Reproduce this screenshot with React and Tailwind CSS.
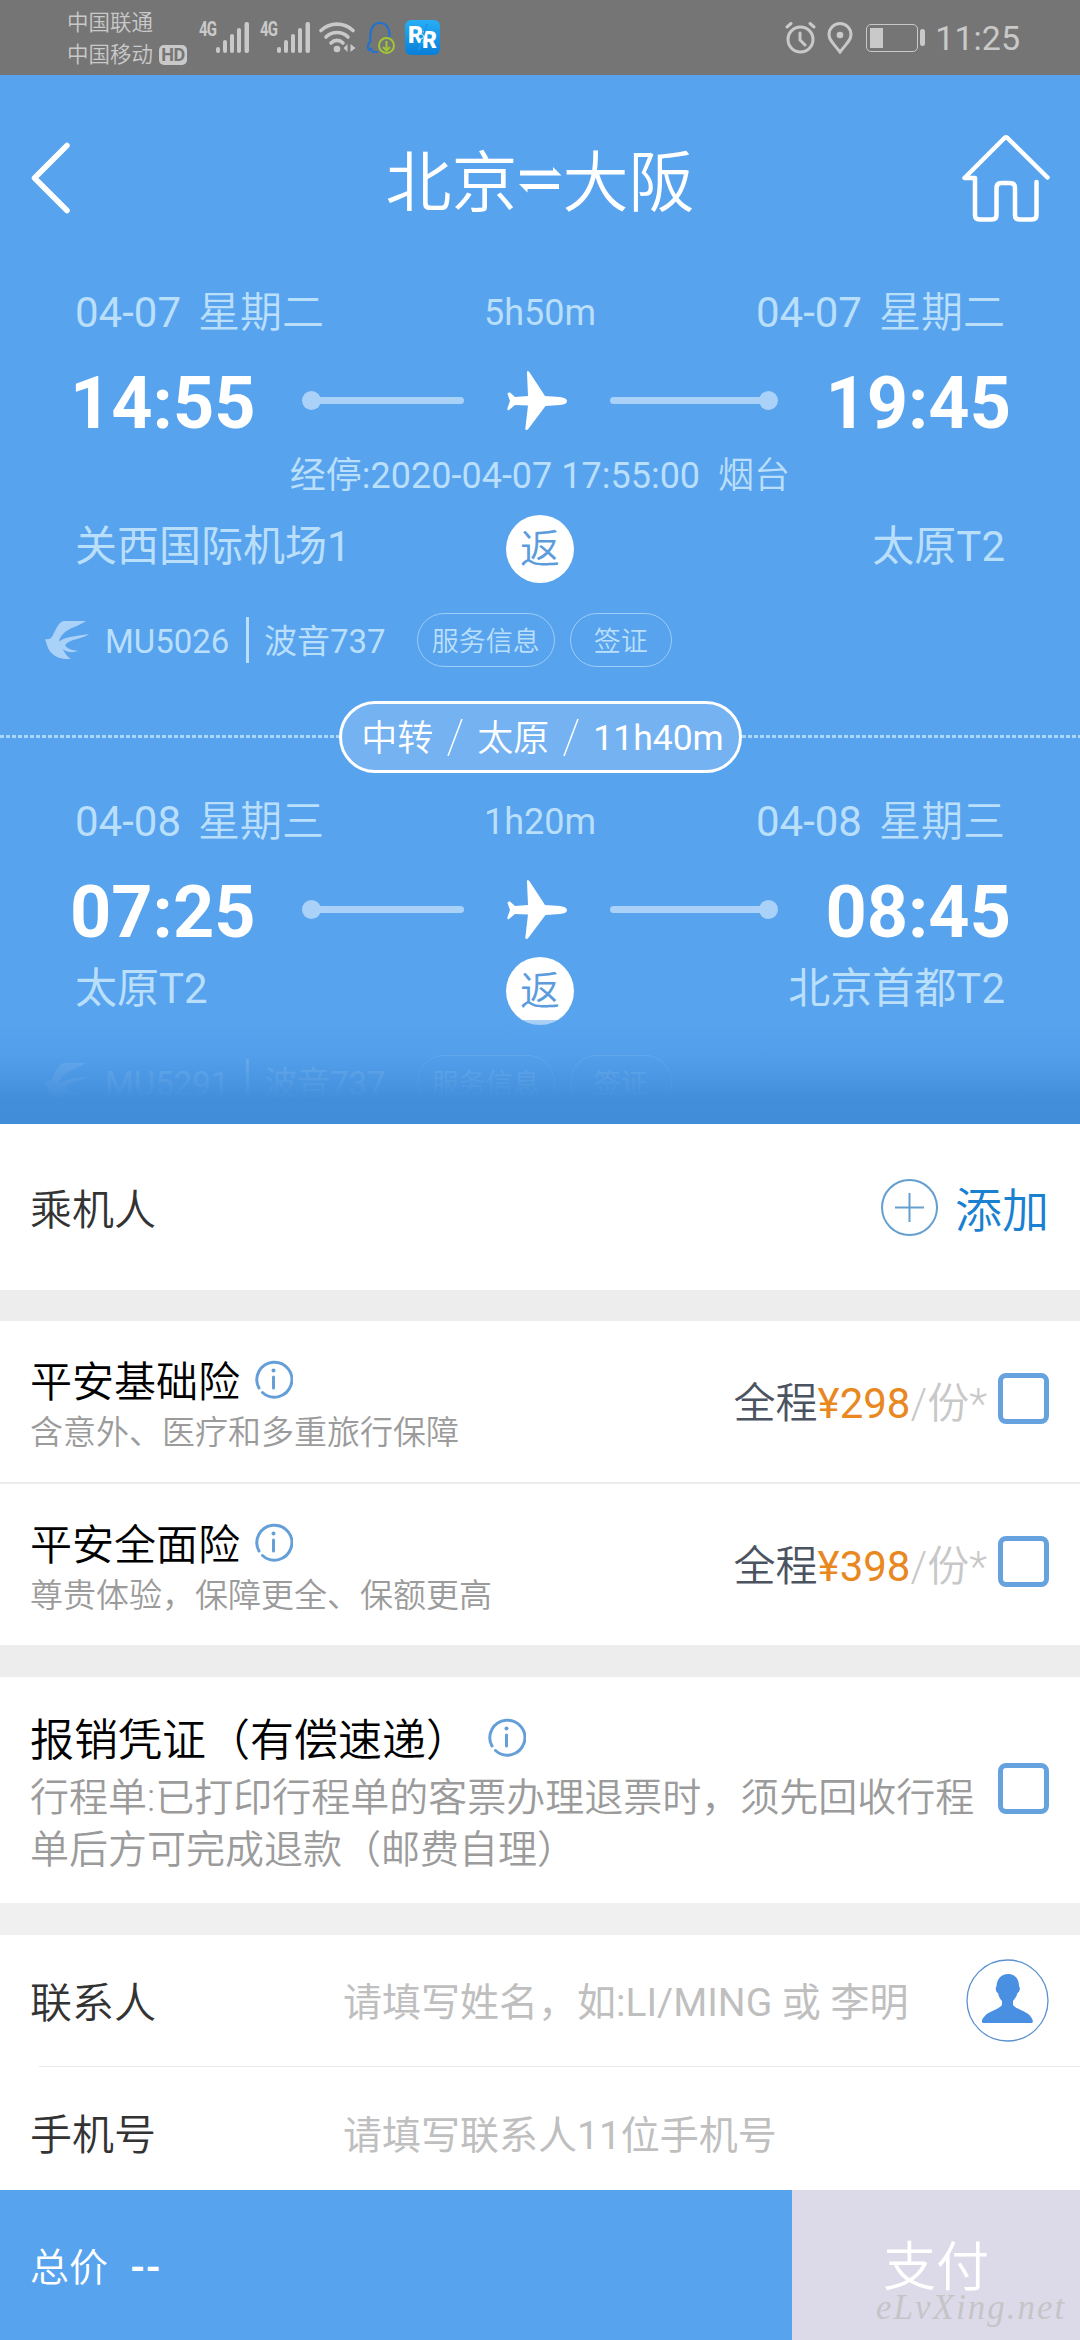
const segments = [
  {
    from: { date: '04-07', day: '星期二', time: '14:55', airport: '关西国际机场1' },
    to: { date: '04-07', day: '星期二', time: '19:45', airport: '太原T2' },
    duration: '5h50m',
    stop: { at: '经停:2020-04-07 17:55:00', city: '烟台' },
    flight: 'MU5026',
    plane: '波音737',
  },
  {
    from: { date: '04-08', day: '星期三', time: '07:25', airport: '太原T2' },
    to: { date: '04-08', day: '星期三', time: '08:45', airport: '北京首都T2' },
    duration: '1h20m',
    flight: 'MU5291',
    plane: '波音737',
  },
];

const insurances = [
  { name: '平安基础险', desc: '含意外、医疗和多重旅行保障', price: '¥298' },
  { name: '平安全面险', desc: '尊贵体验，保障更全、保额更高', price: '¥398' },
];

function Signal() {
  return (
    <div className="flex items-start">
      <span className="w-[17px] text-[20px] leading-[15px] font-bold tracking-[-1px] origin-left scale-x-[0.75] whitespace-nowrap">4G</span>
      <svg width="33" height="31" viewBox="0 0 33 31" fill="currentColor">
        <rect x="0" y="25" width="4" height="6" rx="2" />
        <rect x="7" y="18" width="4" height="13" rx="2" />
        <rect x="14" y="12" width="4" height="19" rx="2" />
        <rect x="21" y="6" width="4" height="25" rx="2" />
        <rect x="28.5" y="0" width="4.5" height="31" rx="2" />
      </svg>
    </div>
  );
}

function StatusBar() {
  return (
    <div className="h-[75px] bg-[#757575] text-[#c9c9c9] flex items-center justify-between pl-[67px] pr-[60px]">
      <div className="flex items-center">
        <div className="w-[132px] pt-[2px] text-[21.5px] leading-[32px] font-[350]">
          <div>中国联通</div>
          <div className="flex items-center gap-[6px]">
            中国移动
            <span className="w-7 h-5 rounded-[5px] bg-[#c9c9c9] text-[#757575] text-[18px] leading-5 font-bold text-center tracking-tight">HD</span>
          </div>
        </div>
        <Signal />
        <div className="w-[11px]" />
        <Signal />
        <svg className="ml-[9px]" width="37" height="31" viewBox="0 0 37 31" fill="none" stroke="currentColor" strokeWidth="3.6" strokeLinecap="round">
          <path d="M2 8.5C11 0 25 0 34 8.5" />
          <path d="M7 15c6-6 16-6 22 0" />
          <path d="M12 21c3.5-3.5 8.500-3.500 12 0" />
          <circle cx="18" cy="27" r="3.300" fill="currentColor" stroke="none" />
          <path d="M28.500 22v8l-4-4zM31.500 22v8l5-4z" fill="currentColor" stroke="none" />
        </svg>
        <svg className="ml-[10px]" width="30" height="34" viewBox="0 0 30 34" fill="none">
          <path d="M12 31H7l-2-3-2 1c-2-3-1-6 1.500-9C3 9 7 2 14 2s10 6 9.500 14" stroke="#2173cf" strokeWidth="2.200" />
          <circle cx="20.500" cy="24.500" r="7.500" fill="#757575" stroke="#a0c537" strokeWidth="2" />
          <path d="M20.500 20v9M17 26l3.500 3.500L24 26" stroke="#a0c537" strokeWidth="2" />
        </svg>
        <div className="ml-[9px] w-[35px] h-[35px] rounded-[6px] bg-gradient-to-b from-[#27aef5] to-[#087ed8] text-white text-[23px] font-black flex items-center justify-center leading-none relative">
          <span className="-mt-[5px]">R</span>
          <span className="mt-[6px] -ml-px">R</span>
          <svg className="absolute inset-0" width="35" height="35" viewBox="0 0 35 35" fill="none">
            <path d="M22 4 14 30" stroke="#1899e8" strokeWidth="2" />
            <circle cx="16" cy="16.500" r="2.500" fill="#1899e8" stroke="#fff" strokeWidth=".8" />
          </svg>
        </div>
      </div>
      <div className="flex items-center">
        <svg width="31" height="32" viewBox="0 0 31 32" fill="none" stroke="currentColor" strokeWidth="3" strokeLinecap="round">
          <circle cx="15.500" cy="17.500" r="12.500" />
          <path d="M15 11v7l5 5M2 5l4-3.500M29 5l-4-3.500" />
        </svg>
        <svg className="ml-[11px]" width="26" height="32" viewBox="0 0 26 32" fill="none" stroke="currentColor" strokeWidth="3">
          <path d="M13 30C7 22 2 18.500 2 12.500a11 11 0 0 1 22 0C24 18.500 19 22 13 30z" />
          <circle cx="13" cy="13" r="3.300" fill="currentColor" stroke="none" />
        </svg>
        <div className="ml-[13px] w-[52px] h-7 border-[1.500px] border-current rounded-[5px] p-[3px]">
          <div className="w-[13px] h-full bg-current" />
        </div>
        <div className="ml-[2px] w-[5px] h-[17px] rounded-full bg-current" />
        <div className="ml-[10px] text-[34px] leading-none">11:25</div>
      </div>
    </div>
  );
}

function TitleBar() {
  return (
    <div className="h-[211px] px-[30px] flex items-center justify-between text-white">
      <svg className="-mt-[6px] w-[88px]" height="74" viewBox="0 0 88 74" fill="none" stroke="currentColor" strokeWidth="5.500" strokeLinecap="round" strokeLinejoin="round">
        <path d="M37 4.500 4.500 37 37 69.500" />
      </svg>
      <div className="pt-[7px] flex items-center text-[66px] leading-none font-[350]">
        北京
        <svg className="mx-[1px] -mt-[8px]" width="43" height="30" viewBox="0 0 43 30" fill="currentColor">
          <path d="M1 5.500H34V2l8.500 8.500H1zM0 19l8.500 8.500V24H40V19z" />
        </svg>
        大阪
      </div>
      <svg className="-mt-[6px]" width="88" height="88" viewBox="0 0 88 88" fill="none" stroke="currentColor" strokeWidth="4.500" strokeLinecap="round" strokeLinejoin="round">
        <path d="M85.500 43.500 46 4.500q-2-2.500-4 0L2.500 44H13v37q0 4.500 4.500 4.500H30q4.500 0 4.500-4.500V54q0-5 5-5H48q5 0 5 5v27q0 4.500 4.500 4.500H70q4.500 0 4.500-4.500V48" />
      </svg>
    </div>
  );
}

function Plane() {
  return (
    <svg className="ml-[43px] mr-[41px]" width="62" height="60" viewBox="0 0 62 60" fill="#fff">
      <path d="M20.500 0Q22 0 23 2L38 25L53 26Q60 27 60 30Q60 33.500 53 34L38.500 35L22 57Q20.500 59.500 19 59Q18 58.500 18.500 56L21 34.500L8 34L2 39Q0 40 .5 37L3 30L.5 23Q.5 21 3 21.500L8 26L21 25L20 2Q20 0 20.500 0Z" />
    </svg>
  );
}

function Track({ flip }) {
  return (
    <div className={flip ? 'flex flex-row-reverse items-center' : 'flex items-center'}>
      <div className="w-[19px] h-[19px] rounded-full bg-[#aad1f8]" />
      <div className={flip ? 'w-[150px] h-[7px] -mr-px rounded-l-full bg-[#aad1f8]' : 'w-[144px] h-[7px] -ml-px rounded-r-full bg-[#aad1f8]'} />
    </div>
  );
}

function AirlineLogo() {
  return (
    <svg width="44" height="38" viewBox="0 0 44 38" fill="#aad1f8">
      <path d="M0 18c4 1 6 0 8-4C12 6 14 1 19 0h22C34 5 24 7 19 12c-3 3-5 6-5 9 4 7 6 13 12 17-12 1-20-4-23-11z" />
      <path d="M13 22c4-6 18-7 31-9-8 6-18 4-24 11 3 5 8 5 13 6-8 3-17 0-20-8z" />
    </svg>
  );
}

function Segment({ from, to, duration, stop, flight, plane }) {
  return (
    <div className="text-[#b9dffb]">
      <div className="h-[52px] pt-[2px] px-[75px] grid grid-cols-[1fr_auto_1fr] items-center text-[42px] leading-none">
        <div className="flex gap-[17px]"><span>{from.date}</span><span className="font-[350]">{from.day}</span></div>
        <span className="text-[36px] leading-none">{duration}</span>
        <div className="flex gap-[17px] justify-end"><span>{to.date}</span><span className="font-[350]">{to.day}</span></div>
      </div>
      <div className="mt-6 h-[77px] pl-[70px] flex items-center">
        <span className="w-[232px] pt-[7px] text-[72px] leading-none font-bold text-white">{from.time}</span>
        <Track />
        <Plane />
        <Track flip />
        <span className="w-[233px] pt-[7px] text-right text-[72px] leading-none font-bold text-white">{to.time}</span>
      </div>
      {stop && (
        <div className="mt-[19px] h-9 flex justify-center gap-[18px] text-[36px] leading-none">
          <span>{stop.at}</span>
          <span className="font-[350]">{stop.city}</span>
        </div>
      )}
      <div className={`${stop ? 'mt-[21px]' : 'mt-[9px]'} h-[68px] px-[75px] grid grid-cols-[1fr_68px_1fr] items-center text-[42px] leading-none`}>
        <span className="-mt-[5px]">{from.airport}</span>
        <span className="h-[68px] rounded-full bg-white text-[#5c9cdc] text-[40px] leading-[70px] text-center font-[350]">返</span>
        <span className="-mt-[5px] text-right">{to.airport}</span>
      </div>
      <div className="mt-[30px] h-[54px] pl-[45px] flex items-center text-[33px] leading-none">
        <AirlineLogo />
        <span className="ml-[16px] w-[125px] pt-[2px]">{flight}</span>
        <span className="ml-[16px] w-[3px] h-[46px] bg-[#b9dffb]" />
        <span className="ml-[15px] pt-[2px]">{plane}</span>
        <span className="ml-[31px] h-[54px] w-[138px] rounded-full border border-[#9bcdf7] text-[27px] leading-[56px] text-center font-[350]">服务信息</span>
        <span className="ml-[15px] h-[54px] w-[102px] rounded-full border border-[#9bcdf7] text-[27px] leading-[56px] text-center font-[350]">签证</span>
      </div>
    </div>
  );
}

function Slash() {
  return (
    <svg className="-mt-[3px]" width="16" height="37" viewBox="0 0 16 37" stroke="#fff" strokeWidth="1.500">
      <path d="M15 0 1 37" />
    </svg>
  );
}

function Transfer() {
  return (
    <div className="mt-[34px] mb-[22px] h-[72px] flex items-center">
      <div className="flex-1 -mt-[2px] h-[3px] bg-[repeating-linear-gradient(90deg,#a9d8fa_0_4px,transparent_4px_6px)]" />
      <div className="w-[403px] h-[72px] pt-[4px] pl-[5px] rounded-full border-[3px] border-white bg-[#75b2f1] text-white text-[36px] leading-none flex items-center justify-center gap-[14px]">
        <span className="font-[350]">中转</span>
        <Slash />
        <span className="font-[350]">太原</span>
        <Slash />
        <span className="text-[35.500px]">11h40m</span>
      </div>
      <div className="flex-1 -mt-[2px] h-[3px] bg-[repeating-linear-gradient(90deg,#a9d8fa_0_4px,transparent_4px_6px)]" />
    </div>
  );
}

function InfoIcon() {
  return (
    <svg className="-mt-[7px]" width="39" height="39" viewBox="0 0 39 39" fill="none" stroke="#659fd8" strokeWidth="3" strokeLinecap="round">
      <path d="M8.500 32.500A17.500 17.500 0 1 0 5 28" />
      <path d="M19.500 17v11" />
      <circle cx="19.500" cy="10.500" r="2" fill="#659fd8" stroke="none" />
    </svg>
  );
}

function Checkbox() {
  return <div className="w-[51px] h-[51px] shrink-0 rounded-[8px] border-[5px] border-[#66a2de]" />;
}

function InsuranceRow({ name, desc, price }) {
  return (
    <div className="h-[161px] pl-[30px] pr-[31px] flex justify-between">
      <div className="pt-[39px]">
        <div className="flex items-center gap-[14px] text-[42px] leading-[46px] font-[350] text-black">
          {name}
          <InfoIcon />
        </div>
        <div className="mt-[8px] text-[33px] leading-[38px] font-[350] text-[#9b9b9b]">{desc}</div>
      </div>
      <div className="pt-[52px] flex items-start text-[42px] leading-[62px]">
        <span className="font-[350] text-[#4b5361]">全程</span>
        <span className="text-[#e8881f]">{price}</span>
        <span className="font-[350] text-[#c8c8c8] mr-[11px]">/份*</span>
        <Checkbox />
      </div>
    </div>
  );
}

export default function App() {
  return (
    <div lang="zh-CN" className="w-[1080px] h-[2340px] overflow-hidden bg-white flex flex-col font-['Roboto','Noto_Sans_CJK_SC',sans-serif]">
      <StatusBar />
      <div className="relative h-[1049px] bg-[#58a3ee]">
        <TitleBar />
        <Segment {...segments[0]} />
        <Transfer />
        <Segment {...segments[1]} />
        {/* fade over the collapsed end of the itinerary */}
        <div className="absolute inset-x-0 bottom-0 h-[104px] bg-[linear-gradient(180deg,rgba(88,163,238,.5)_0%,rgba(82,157,233,.78)_35%,rgba(72,147,223,.92)_62%,#438edb_76%,#428dda_100%)]" />
      </div>

      <div className="h-[166px] pl-[30px] pr-[31px] flex items-center justify-between">
        <span className="pt-[8px] text-[42px] leading-none font-[350] text-[#333]">乘机人</span>
        <div className="flex items-center gap-[17px] text-[47px] leading-none font-[350] text-[#1a80d0]">
          <svg width="57" height="57" viewBox="0 0 57 57" fill="none" stroke="#659fd0" strokeWidth="2">
            <circle cx="28.500" cy="28.500" r="27.500" />
            <path d="M28.500 14v29M14 28.500h29" />
          </svg>
          <span className="pt-[6px]">添加</span>
        </div>
      </div>
      <div className="h-[31px] bg-[#ededed]" />
      <InsuranceRow {...insurances[0]} />
      <div className="h-[2px] bg-[#ededed]" />
      <InsuranceRow {...insurances[1]} />
      <div className="h-8 bg-[#ededed]" />

      <div className="h-[226px] pl-[30px] pr-[31px] pt-[39px] flex">
        <div className="flex-1">
          <div className="flex items-center gap-[17px] text-[44px] leading-[50px] font-[350] text-black">
            报销凭证（有偿速递）
            <InfoIcon />
          </div>
          <div className="mt-[6px] w-[950px] text-[39px] leading-[52px] font-[350] text-[#9b9b9b]">
            行程单:已打印行程单的客票办理退票时，须先回收行程单后方可完成退款（邮费自理）
          </div>
        </div>
        <div className="pt-[47px]">
          <Checkbox />
        </div>
      </div>
      <div className="h-8 bg-[#f0f0f0]" />

      <div className="h-[131px] pl-[30px] pr-[31px] flex items-center text-[42px] leading-none text-[#333]">
        <span className="w-[313px] pt-[7px] font-[350]">联系人</span>
        <span className="flex-1 pt-[5px] text-[39px] leading-none text-[#bfbfbf]">请填写姓名，如:LI/MING 或 李明</span>
        <svg width="83" height="83" viewBox="0 0 83 83" fill="none">
          <circle cx="41.500" cy="41.500" r="40.500" stroke="#5b92cf" strokeWidth="1.300" />
          <path d="M42 15c7 0 11 5 11 12 2 3 0 6-1.500 7-1 4-3 6-4.500 8v4c4 5 14 6 18 12 2 3 2.500 5 1 6H17c-2-1-1-4 1-6 4-6 14-7 18-12v-4c-2-2-3-4-4-8-2-1-3-4-1.500-7C31 20 35 15 42 15z" fill="#4a90e2" />
        </svg>
      </div>
      <div className="ml-[39px] h-px bg-[#e8e8e8]" />
      <div className="h-[123px] pl-[30px] pt-[15px] flex items-center text-[42px] leading-none text-[#333]">
        <span className="w-[313px] font-[350]">手机号</span>
        <span className="text-[39px] leading-none text-[#bfbfbf]">请填写联系人11位手机号</span>
      </div>

      <div className="h-[150px] flex text-white">
        <div className="w-[792px] pl-[30px] pt-[6px] bg-[#58a3ee] flex items-center gap-[22px] text-[39px] leading-none">
          <span className="font-[350]">总价</span>
          <span className="font-bold">--</span>
        </div>
        <div className="relative flex-1 pt-[7px] bg-[#dcdae8] flex items-center justify-center text-[53px] leading-none font-[350]">
          支付
          <span className="absolute left-[84px] top-[105px] font-['Liberation_Serif',serif] font-normal italic text-[35px] leading-[26px] tracking-[2px] text-[#c5c5c8]">eLvXing.net</span>
        </div>
      </div>
    </div>
  );
}
